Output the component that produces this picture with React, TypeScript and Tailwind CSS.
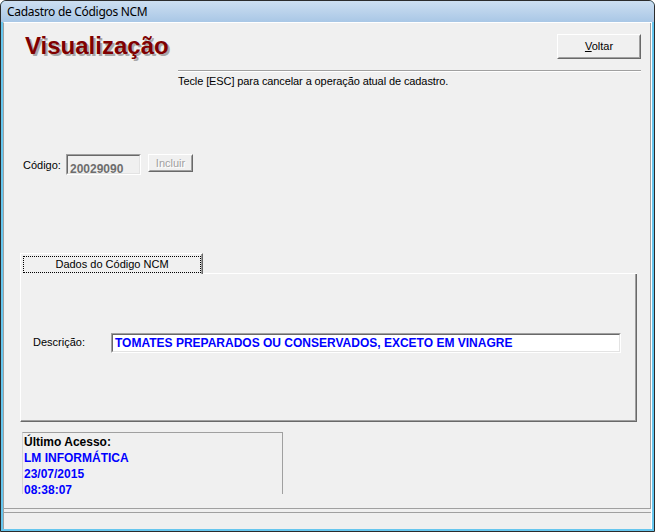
import React from "react";

function RaisedBtn({ children, className = "" }: { children: React.ReactNode; className?: string }) {
  return (
    <div className={`border border-t-white border-l-white border-r-[#696969] border-b-[#696969] ${className}`}>
      <div className="w-full h-full border border-t-[#f0f0f0] border-l-[#f0f0f0] border-r-[#a0a0a0] border-b-[#a0a0a0] flex items-center justify-center">
        {children}
      </div>
    </div>
  );
}

function Sunken({ children, className = "", inner = "" }: { children: React.ReactNode; className?: string; inner?: string }) {
  return (
    <div className={`border border-t-[#a0a0a0] border-l-[#a0a0a0] border-r-white border-b-white ${className}`}>
      <div className={`w-full h-full border border-t-[#696969] border-l-[#696969] border-r-[#e3e3e3] border-b-[#e3e3e3] ${inner}`}>
        {children}
      </div>
    </div>
  );
}

export default function App() {
  return (
    <div className="w-[655px] h-[532px] border border-[#2c2c2c] rounded-t-[6px] overflow-hidden bg-[#66c6ee] flex flex-col px-[2px] pb-[2px] font-['Liberation_Sans',Arial,sans-serif] text-black">
      {/* Title bar */}
      <div className="h-[21px] shrink-0 -mx-[2px] px-[6px] bg-gradient-to-b from-[#cddff1] to-[#a9c7e6] flex items-center">
        <span className="font-['Noto_Sans',sans-serif] text-[12px] leading-[14px] mt-[1px] tracking-[-0.3px] text-black">
          Cadastro de Códigos NCM
        </span>
      </div>

      {/* Client column */}
      <div className="w-[649px] h-[507px] border-t border-t-white border-l border-l-[#a0a0a0] border-r border-r-white bg-[#f0f0f0] flex flex-col">
        {/* Form area */}
        <div className="h-[486px] shrink-0 border-r border-b border-r-[#a0a0a0] border-b-[#a0a0a0] flex flex-col">
          {/* Header */}
          <div className="mt-[11px] flex items-start justify-between pl-[21px] pr-[9px]">
            <div className="text-[24px] leading-[24px] font-bold text-[#800000] [text-shadow:2px_2px_0_#a8a8a8]">
              Visualização
            </div>
            <RaisedBtn className="w-[84px] h-[25px]">
              <span className="text-[11px] leading-[13px]">
                <u>V</u>oltar
              </span>
            </RaisedBtn>
          </div>

          {/* Etched line */}
          <div className="mt-[11px] ml-[174px] mr-[9px] h-[2px] border-t border-b border-t-[#a0a0a0] border-b-white" />

          <div className="mt-[3px] ml-[174px] text-[11px] leading-[13px] tracking-[-0.1px]">
            Tecle [ESC] para cancelar a operação atual de cadastro.
          </div>

          {/* Código row */}
          <div className="mt-[66px] flex items-start pl-[19px]">
            <div className="w-[43px] mt-[5px] text-[11px] leading-[13px]">Código:</div>
            <Sunken className="w-[75px] h-[21px]" inner="bg-[#f0f0f0] pl-[2px]">
              <span className="text-[12px] leading-[16px] font-bold text-[#6d6d6d]">20029090</span>
            </Sunken>
            <RaisedBtn className="ml-[7px] w-[45px] h-[18px]">
              <span className="text-[11px] leading-[13px] text-[#a0a0a0] [text-shadow:1px_1px_0_#ffffff]">Incluir</span>
            </RaisedBtn>
          </div>

          {/* Tab control */}
          <div className="mt-[78px] ml-[16px] mr-[13px] flex flex-col">
            <div className="flex h-[21px]">
              <div className="w-[183px] h-full border-t border-l border-r border-t-white border-l-white border-r-[#696969]">
                <div className="h-full border-r border-r-[#a0a0a0] pt-[2px] pl-[2px]">
                  <div className="h-[17px] border border-dotted border-black flex items-center justify-center text-[11px] leading-[13px]">
                    Dados do Código NCM
                  </div>
                </div>
              </div>
              <div className="flex-1 border-b border-b-white" />
            </div>
            <div className="h-[148px] border-l border-l-white border-r border-b border-r-[#696969] border-b-[#696969]">
              <div className="h-full border-r border-b border-r-[#a0a0a0] border-b-[#a0a0a0] pt-[59px] pl-[12px] flex items-start">
                <div className="w-[78px] mt-[3px] text-[11px] leading-[13px]">Descrição:</div>
                <Sunken className="w-[510px] h-[20px]" inner="bg-white pl-[2px]">
                  <span className="block text-[12px] leading-[16px] font-bold text-[#0000ff] whitespace-nowrap">
                    TOMATES PREPARADOS OU CONSERVADOS, EXCETO EM VINAGRE
                  </span>
                </Sunken>
              </div>
            </div>
          </div>

          {/* Último acesso */}
          <div className="mt-[10px] ml-[18px] w-[261px] h-[62px] border-t border-l border-r border-t-[#a0a0a0] border-l-[#d4d4d4] border-r-[#a0a0a0] pt-[1px] pl-[1px] text-[12px] leading-[16px] font-bold">
            <div className="text-black">Último Acesso:</div>
            <div className="text-[#0000ff]">LM INFORMÁTICA</div>
            <div className="text-[#0000ff]">23/07/2015</div>
            <div className="text-[#0000ff]">08:38:07</div>
          </div>
        </div>

        {/* Status bar */}
        <div className="mt-[3px] h-[17px] border-t border-t-[#a0a0a0]" />
      </div>
    </div>
  );
}
